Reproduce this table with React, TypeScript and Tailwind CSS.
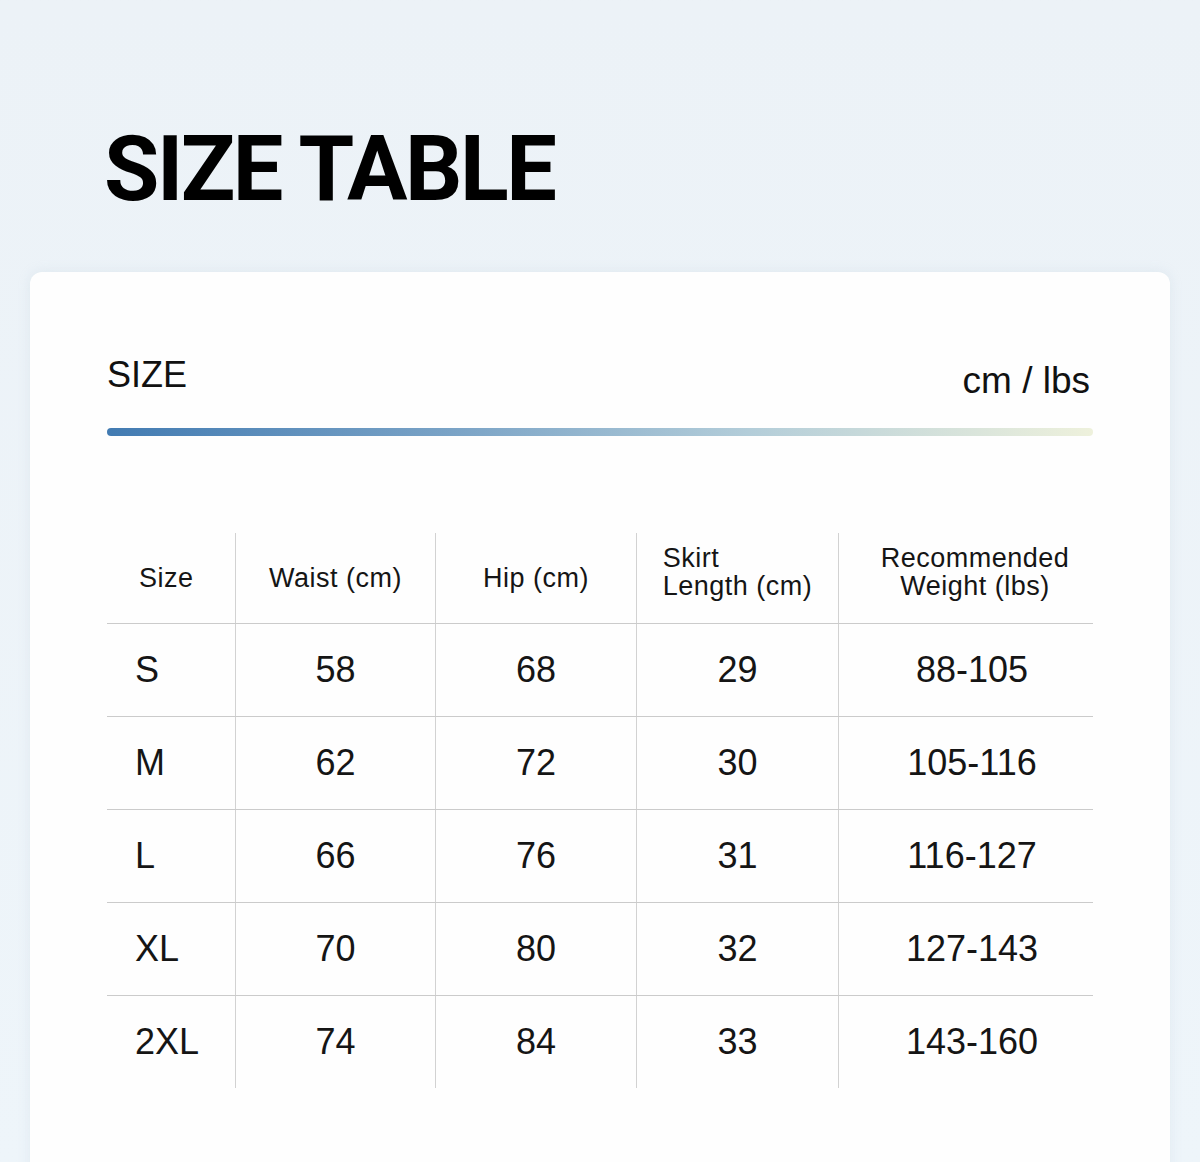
const rows = [
  { size: "S", waist: 58, hip: 68, length: 29, weight: "88-105" },
  { size: "M", waist: 62, hip: 72, length: 30, weight: "105-116" },
  { size: "L", waist: 66, hip: 76, length: 31, weight: "116-127" },
  { size: "XL", waist: 70, hip: 80, length: 32, weight: "127-143" },
  { size: "2XL", waist: 74, hip: 84, length: 33, weight: "143-160" },
];

const COLS = "grid grid-cols-[128px_200px_201px_202px_1fr]";

export default function App() {
  return (
    <div
      className="h-[1162px] overflow-hidden bg-gradient-to-b from-[#ecf2f7] to-[#eef5fa] pt-[125px] text-[#111]"
      style={{ fontFamily: '"Liberation Sans", Arial, sans-serif' }}
    >
      <h1
        className="px-[104px] text-[90px] font-bold leading-none tracking-[-2.5px] text-black"
        style={{ fontFamily: "Roboto, 'Liberation Sans', sans-serif" }}
      >
        SIZE TABLE
      </h1>

      <section className="mx-[30px] mt-[57px] h-[960px] rounded-[12px] bg-[#fefefe] px-[77px] pt-[85px] shadow-[0_0_12px_rgba(180,200,215,0.25)]">
        <div className="flex items-start justify-between">
          <span className="text-[36px] leading-none">SIZE</span>
          <span className="pr-[3px] pt-[5px] text-[37px] leading-none">cm / lbs</span>
        </div>
        <div className="mt-[29px] h-[8px] rounded-full bg-[linear-gradient(to_right,#427bb2,#7aa3c6_35%,#b3cdd9_65%,#eef1dc)]" />

        <div className="mt-[97px] text-[#151515]">
          <div className={`${COLS} h-[90px] text-[27px] leading-[28px] tracking-[0.5px]`}>
            <div className="flex items-center pl-[32px]">Size</div>
            <div className="flex items-center justify-center border-l border-[#d2d2d2]">Waist (cm)</div>
            <div className="flex items-center justify-center border-l border-[#d2d2d2]">Hip (cm)</div>
            <div className="flex items-center justify-center border-l border-[#d2d2d2]">
              <span className="mb-[12px] text-left">
                Skirt
                <br />
                Length (cm)
              </span>
            </div>
            <div className="flex items-center justify-center border-l border-[#d2d2d2] pl-[18px]">
              <span className="mb-[12px] text-center">
                Recommended
                <br />
                Weight (lbs)
              </span>
            </div>
          </div>

          {rows.map((r) => (
            <div
              key={r.size}
              className={`${COLS} h-[93px] border-t-[1.5px] border-[#cbcbcb] text-[36px] leading-none`}
            >
              <div className="flex items-center pl-[28px]">{r.size}</div>
              <div className="flex items-center justify-center border-l border-[#d2d2d2]">{r.waist}</div>
              <div className="flex items-center justify-center border-l border-[#d2d2d2]">{r.hip}</div>
              <div className="flex items-center justify-center border-l border-[#d2d2d2]">{r.length}</div>
              <div className="flex items-center justify-center border-l border-[#d2d2d2] pl-[12px]">
                {r.weight}
              </div>
            </div>
          ))}
        </div>
      </section>
    </div>
  );
}
